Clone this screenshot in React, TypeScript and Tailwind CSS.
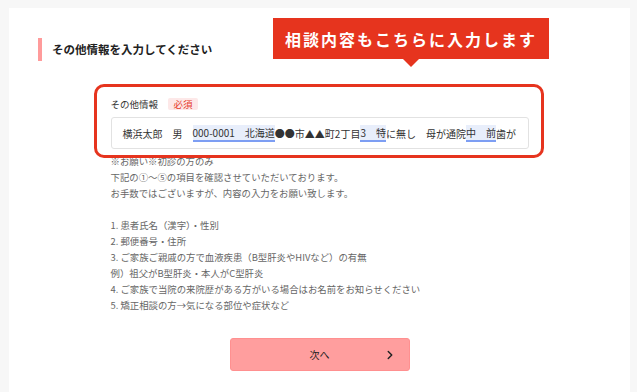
import { ChevronRight } from "lucide-react";

const notes = [
  "※お願い※初診の方のみ",
  "下記の①～⑤の項目を確認させていただいております。",
  "お手数ではございますが、内容の入力をお願い致します。",
  "",
  "1. 患者氏名（漢字）・性別",
  "2. 郵便番号・住所",
  "3. ご家族ご親戚の方で血液疾患（B型肝炎やHIVなど）の有無",
  "例）祖父がB型肝炎・本人がC型肝炎",
  "4. ご家族で当院の来院歴がある方がいる場合はお名前をお知らせください",
  "5. 矯正相談の方→気になる部位や症状など",
];

const Mark = ({ children }: { children: React.ReactNode }) => (
  <span className="bg-[#e8eefb] border-b-2 border-[#7d9ef3]">{children}</span>
);

export default function App() {
  return (
    <div className="min-h-[392px] bg-[#f7f7f7] pt-[8px] pl-[9px] pr-[7px] font-['Noto_Sans_CJK_JP',sans-serif]">
      <div className="relative min-h-[384px] bg-white pt-[30px] pb-[20px]">
        {/* heading */}
        <div className="ml-[29px] flex h-[23px] items-center border-l-4 border-[#ff9b9b] pl-[10px]">
          <h2 className="text-[11.5px] font-bold text-[#222]">
            その他情報を入力してください
          </h2>
        </div>

        {/* tooltip */}
        <div className="absolute left-[264px] top-[10px] flex h-[41px] w-[276px] items-center justify-center bg-[#e6341e]">
          <span className="text-[16px] font-bold tracking-[2px] text-white">
            相談内容もこちらに入力します
          </span>
          <div className="absolute -bottom-[8px] left-[130px] h-0 w-0 border-x-[8px] border-t-[8px] border-x-transparent border-t-[#e6341e]" />
        </div>

        {/* form */}
        <div className="relative mx-auto mt-[37px] w-[418px]">
          <div className="flex h-[12px] items-center gap-[10px]">
            <span className="text-[9.5px] text-[#333]">その他情報</span>
            <span className="flex h-[12px] w-[30px] items-center justify-center rounded-[2px] bg-[#fde8e8] text-[9.5px] text-[#e53a2a]">
              必須
            </span>
          </div>
          <div className="mt-[7px] flex h-[32px] items-center overflow-hidden whitespace-nowrap rounded-[3px] border border-[#e2e2e2] pl-[11px] text-[10px] text-[#333]">
            横浜太郎　男　<Mark>000-0001　北海道</Mark>●●市▲▲町2丁目<Mark>3　特</Mark>に無し　母が通院<Mark>中　前</Mark>歯が
          </div>
          <div className="mt-[4px] text-[9.4px] leading-[16px] text-[#666]">
            {notes.map((line, i) => (
              <p key={i} className="h-[16px]">
                {line}
              </p>
            ))}
          </div>

          {/* highlight frame */}
          <div className="absolute -left-[17px] -top-[14px] h-[74px] w-[450px] rounded-[10px] border-[3px] border-[#e6341e]" />
        </div>

        <button className="relative mx-auto mt-[25px] flex h-[33px] w-[180px] items-center justify-center rounded-[3px] border border-[#ff9090] bg-[#ff9e9e] text-[10px] text-[#222]">
          次へ
          <ChevronRight
            className="absolute right-[12px] top-1/2 -translate-y-1/2"
            size={14}
            strokeWidth={2.5}
          />
        </button>
      </div>
    </div>
  );
}
